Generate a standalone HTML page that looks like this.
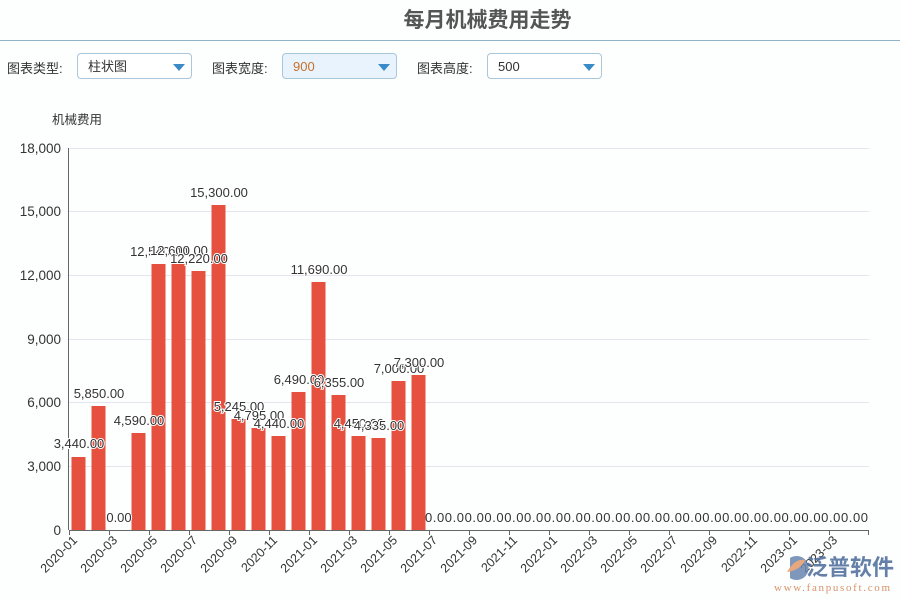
<!DOCTYPE html>
<html><head><meta charset="utf-8"><style>
body{margin:0;width:900px;height:600px;background:#fdfefe;font-family:"Liberation Sans","Noto Sans CJK SC",sans-serif;position:relative;overflow:hidden;color:#333}
.title{position:absolute;left:0;width:975px;top:4px;text-align:center;font-size:21px;font-weight:bold;color:#555}
.line{position:absolute;left:0;right:0;top:40px;height:1px;background:#90b4c6}
.lab{position:absolute;top:58px;font-size:13px;color:#333}
.sel{position:absolute;top:53px;height:26px;border:1px solid #a9c6da;border-radius:4px;background:#fff;font-size:13px;line-height:26px;padding-left:10px;box-sizing:border-box}
.sel:after{content:"";position:absolute;right:6px;top:10px;border-left:6px solid transparent;border-right:6px solid transparent;border-top:7px solid #3a8ac8}
svg{position:absolute;left:0;top:0}
</style></head><body>
<div class="title">每月机械费用走势</div>
<div class="line"></div>
<div class="lab" style="left:7px">图表类型:</div>
<div class="sel" style="left:77px;width:115px">柱状图</div>
<div class="lab" style="left:212px">图表宽度:</div>
<div class="sel" style="left:282px;width:115px;background:#e8f3fd;color:#c8702a">900</div>
<div class="lab" style="left:417px">图表高度:</div>
<div class="sel" style="left:487px;width:115px">500</div>
<svg width="900" height="600" font-family="Liberation Sans, Noto Sans CJK SC, sans-serif" font-size="12">
<text x="52" y="124" font-size="12.5" fill="#333">机械费用</text>
<g stroke="#e3e6ee" stroke-width="1">
<line x1="69" x2="869" y1="466.5" y2="466.5"/><line x1="69" x2="869" y1="402.5" y2="402.5"/><line x1="69" x2="869" y1="339.5" y2="339.5"/><line x1="69" x2="869" y1="275.5" y2="275.5"/><line x1="69" x2="869" y1="211.5" y2="211.5"/><line x1="69" x2="869" y1="148.5" y2="148.5"/>
</g>
<g text-anchor="end" fill="#333" font-size="13.5">
<text x="61" y="535">0</text><text x="61" y="471">3,000</text><text x="61" y="407">6,000</text><text x="61" y="344">9,000</text><text x="61" y="280">12,000</text><text x="61" y="216">15,000</text><text x="61" y="153">18,000</text>
</g>
<line x1="68.5" y1="148" x2="68.5" y2="530" stroke="#666"/>
<g fill="#e5503f">
<rect x="71.5" y="457" width="14" height="73"/><rect x="91.5" y="406" width="14" height="124"/>
<rect x="131.5" y="433" width="14" height="97"/><rect x="151.5" y="264" width="14" height="266"/>
<rect x="171.5" y="263" width="14" height="267"/><rect x="191.5" y="271" width="14" height="259"/>
<rect x="211.5" y="205" width="14" height="325"/><rect x="231.5" y="419" width="14" height="111"/>
<rect x="251.5" y="428" width="14" height="102"/><rect x="271.5" y="436" width="14" height="94"/>
<rect x="291.5" y="392" width="14" height="138"/><rect x="311.5" y="282" width="14" height="248"/>
<rect x="331.5" y="395" width="14" height="135"/><rect x="351.5" y="436" width="14" height="94"/>
<rect x="371.5" y="438" width="14" height="92"/><rect x="391.5" y="381" width="14" height="149"/>
<rect x="411.5" y="375" width="14" height="155"/>
</g>
<line x1="69" y1="530.5" x2="869" y2="530.5" stroke="#666"/>
<g stroke="#666"><line x1="69.5" x2="69.5" y1="530" y2="535"/><line x1="109.5" x2="109.5" y1="530" y2="535"/><line x1="149.5" x2="149.5" y1="530" y2="535"/><line x1="189.5" x2="189.5" y1="530" y2="535"/><line x1="229.5" x2="229.5" y1="530" y2="535"/><line x1="269.5" x2="269.5" y1="530" y2="535"/><line x1="309.5" x2="309.5" y1="530" y2="535"/><line x1="349.5" x2="349.5" y1="530" y2="535"/><line x1="389.5" x2="389.5" y1="530" y2="535"/><line x1="429.5" x2="429.5" y1="530" y2="535"/><line x1="469.5" x2="469.5" y1="530" y2="535"/><line x1="509.5" x2="509.5" y1="530" y2="535"/><line x1="549.5" x2="549.5" y1="530" y2="535"/><line x1="589.5" x2="589.5" y1="530" y2="535"/><line x1="629.5" x2="629.5" y1="530" y2="535"/><line x1="669.5" x2="669.5" y1="530" y2="535"/><line x1="709.5" x2="709.5" y1="530" y2="535"/><line x1="749.5" x2="749.5" y1="530" y2="535"/><line x1="789.5" x2="789.5" y1="530" y2="535"/><line x1="829.5" x2="829.5" y1="530" y2="535"/><line x1="868.5" x2="868.5" y1="530" y2="535"/></g>
<g text-anchor="middle" fill="#333" font-size="13" stroke="#fff" stroke-width="2" paint-order="stroke">
<text x="79" y="448">3,440.00</text><text x="99" y="398">5,850.00</text><text x="119" y="522">0.00</text>
<text x="139" y="425">4,590.00</text><text x="159" y="256">12,540.00</text><text x="179" y="255">12,600.00</text>
<text x="199" y="263">12,220.00</text><text x="219" y="197">15,300.00</text><text x="239" y="411">5,245.00</text>
<text x="259" y="420">4,795.00</text><text x="279" y="428">4,440.00</text><text x="299" y="384">6,490.00</text>
<text x="319" y="274">11,690.00</text><text x="339" y="387">6,355.00</text><text x="359" y="428">4,450.00</text>
<text x="379" y="430">4,335.00</text><text x="399" y="373">7,000.00</text><text x="419" y="367">7,300.00</text>
</g>
<text x="425" y="522" fill="#333" font-size="13" textLength="443">0.00.00.00.00.00.00.00.00.00.00.00.00.00.00.00.00.00.00.00.00.00.00</text>
<g text-anchor="end" fill="#333" font-size="12.5">
<text transform="translate(78,541) rotate(-45)">2020-01</text><text transform="translate(118,541) rotate(-45)">2020-03</text><text transform="translate(158,541) rotate(-45)">2020-05</text><text transform="translate(198,541) rotate(-45)">2020-07</text><text transform="translate(238,541) rotate(-45)">2020-09</text><text transform="translate(278,541) rotate(-45)">2020-11</text><text transform="translate(318,541) rotate(-45)">2021-01</text><text transform="translate(358,541) rotate(-45)">2021-03</text><text transform="translate(398,541) rotate(-45)">2021-05</text><text transform="translate(438,541) rotate(-45)">2021-07</text><text transform="translate(478,541) rotate(-45)">2021-09</text><text transform="translate(518,541) rotate(-45)">2021-11</text><text transform="translate(558,541) rotate(-45)">2022-01</text><text transform="translate(598,541) rotate(-45)">2022-03</text><text transform="translate(638,541) rotate(-45)">2022-05</text><text transform="translate(678,541) rotate(-45)">2022-07</text><text transform="translate(718,541) rotate(-45)">2022-09</text><text transform="translate(758,541) rotate(-45)">2022-11</text><text transform="translate(798,541) rotate(-45)">2023-01</text><text transform="translate(838,541) rotate(-45)">2023-03</text>
</g>
<g opacity="0.85">
<path d="M790 558 a12 12 0 1 1 0 20 z" fill="#6a86b0"/>
<path d="M787 572 q8 -14 18 -12 q-4 10 -18 12z" fill="#e49a6a"/>
<text x="806" y="575" font-size="22" font-weight="bold" fill="#4a6a9a">泛普软件</text>
<text x="774" y="591" font-size="11" fill="#d08050" font-family="Liberation Serif, serif" textLength="116">www.fanpusoft.com</text>
</g>
</svg>
</body></html>
